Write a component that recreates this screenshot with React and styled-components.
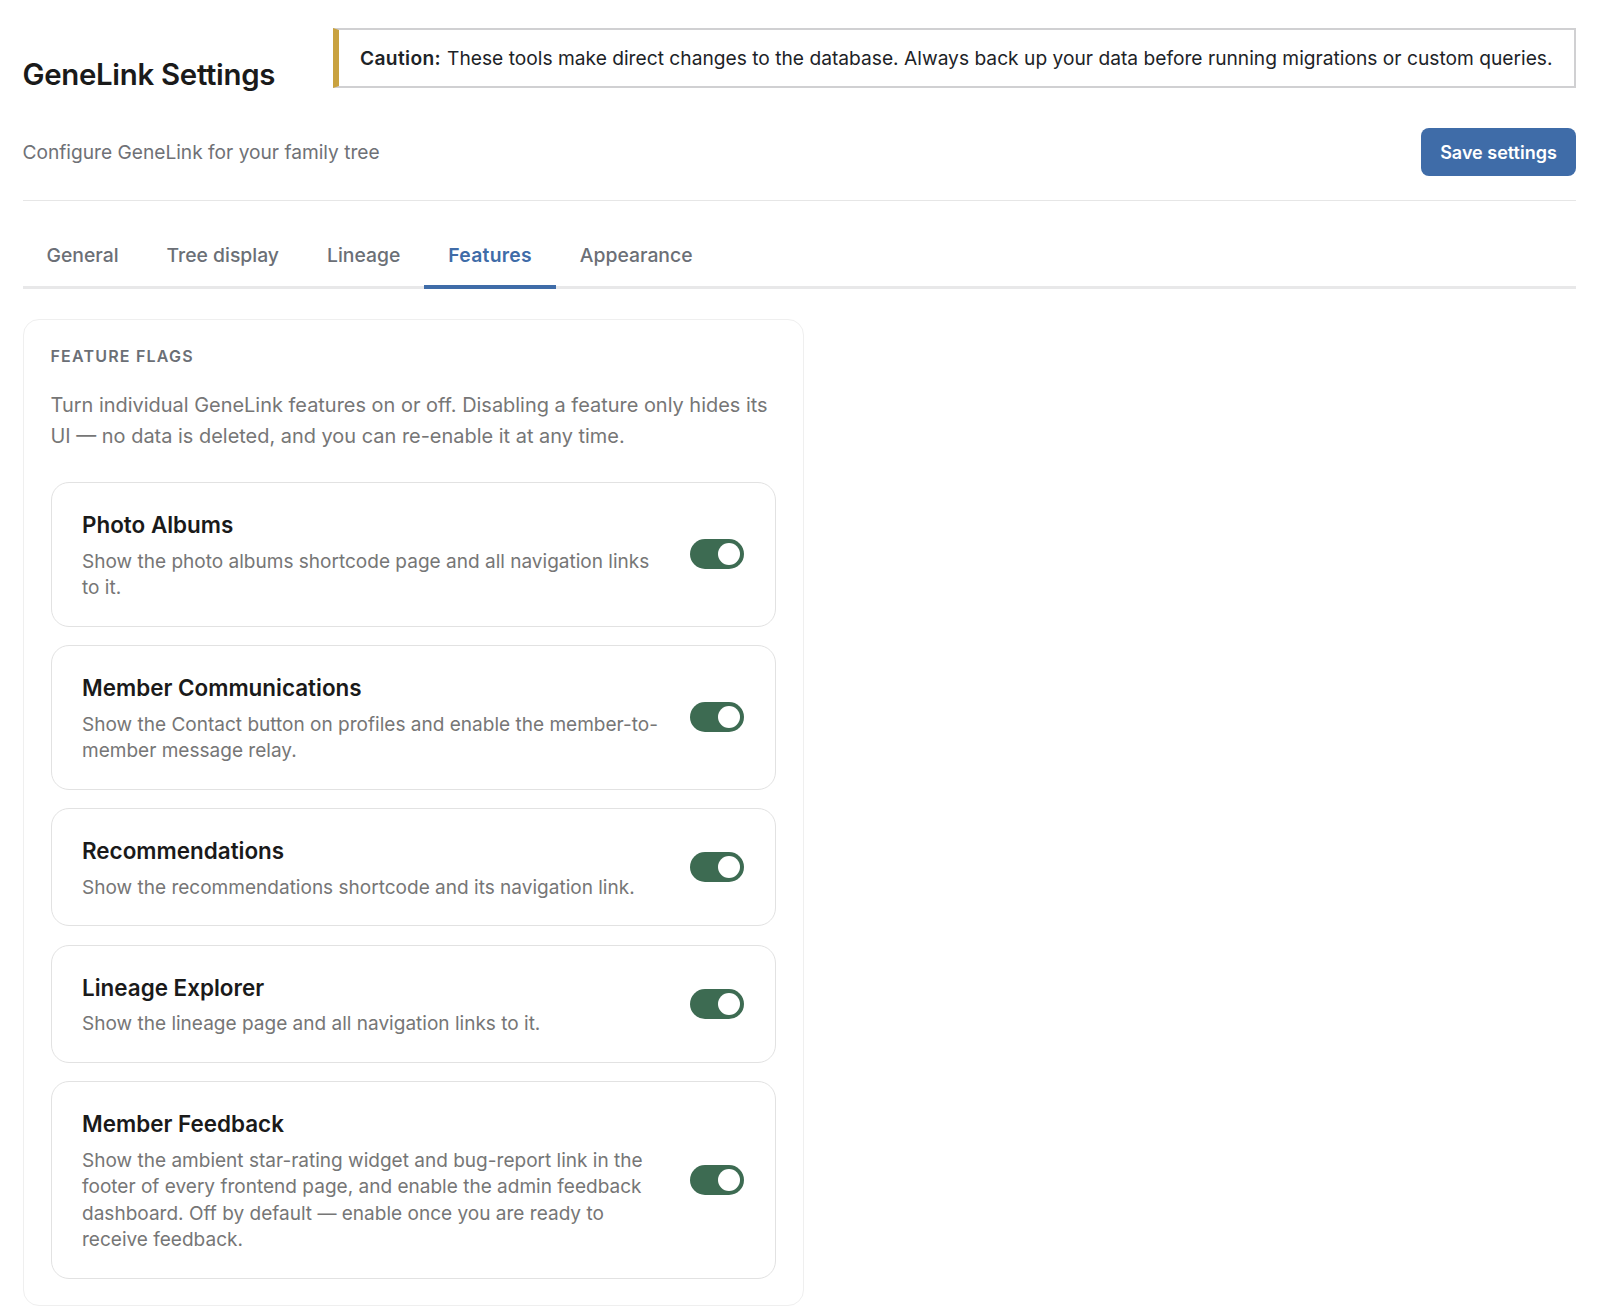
import React, { useState } from "react";
import styled, { createGlobalStyle } from "styled-components";

const GlobalStyle = createGlobalStyle`
  html, body {
    margin: 0;
    background: #fff;
    font-family: Inter, "Liberation Sans", sans-serif;
  }
`;

const Page = styled.div`
  padding: 28px 24px 4px 22.5px;
`;

const TopRow = styled.div`
  display: flex;
  align-items: flex-start;
`;

const Title = styled.h1`
  margin: 35px 0 0;
  width: 310.5px;
  font-size: 29.4px;
  line-height: 24px;
  font-weight: 600;
  color: #1a1a1a;
  letter-spacing: -0.3px;
  white-space: nowrap;
`;

const Notice = styled.div`
  flex: 1;
  box-sizing: border-box;
  height: 60px;
  display: flex;
  align-items: center;
  padding-left: 21px;
  background: #fff;
  border: 2px solid #d0d0d2;
  border-left: 6px solid #c9a23f;
  font-size: 19.2px;
  color: #1d2327;

  strong {
    font-weight: 600;
    letter-spacing: 0.35px;
    margin-right: 6px;
  }
`;

const SubRow = styled.div`
  display: flex;
  align-items: center;
  justify-content: space-between;
  margin-top: 40px;
  padding-bottom: 24px;
  border-bottom: 1px solid #e6e6e6;
`;

const Subtitle = styled.p`
  margin: 0;
  font-size: 19.15px;
  color: #6f7176;
`;

const SaveButton = styled.button`
  height: 48px;
  width: 155px;
  border: 0;
  border-radius: 8px;
  background: #3f6ca8;
  color: #fff;
  font: 600 18px Inter, sans-serif;
`;

const Tabs = styled.div`
  display: flex;
  margin-top: 27px;
  border-bottom: 3px solid #e8e8e9;
`;

const Tab = styled.div`
  padding: 15px 24px 18px;
  margin-bottom: -3px;
  font-size: 19.35px;
  line-height: 24px;
  font-weight: ${(p) => (p.$active ? 600 : 500)};
  letter-spacing: ${(p) => (p.$active ? "0.25px" : "0")};
  color: ${(p) => (p.$active ? "#3f6ca8" : "#6b6f76")};
  border-bottom: 4px solid ${(p) => (p.$active ? "#3f6ca8" : "transparent")};
`;

const Card = styled.section`
  box-sizing: border-box;
  width: 781px;
  margin-top: 30px;
  padding: 26px 27px 26px;
  border: 1px solid #efefef;
  border-radius: 16px;
`;

const CardLabel = styled.h2`
  margin: 0;
  font-size: 16px;
  line-height: 20px;
  font-weight: 600;
  letter-spacing: 1.2px;
  color: #6b6f76;
`;

const CardIntro = styled.p`
  margin: 24px 0 30px;
  font-size: 19.95px;
  line-height: 31px;
  color: #767676;
`;

const Rows = styled.div`
  display: flex;
  flex-direction: column;
  gap: 18.5px;
`;

const Row = styled.div`
  display: flex;
  align-items: center;
  gap: 27px;
  padding: 27px 31px 24px 30.5px;
  border: 1px solid #e2e2e2;
  border-radius: 18px;
`;

const RowText = styled.div`
  flex: 1;
`;

const RowTitle = styled.h3`
  margin: 0 0 9.5px;
  font-size: 22.45px;
  line-height: 29px;
  font-weight: 600;
  color: #1a1a1a;
`;

const RowDesc = styled.p`
  margin: 0;
  font-size: 19.05px;
  line-height: 26.5px;
  color: #767676;
`;

const Toggle = styled.button`
  position: relative;
  flex: none;
  width: 54px;
  height: 30px;
  margin-bottom: 3px;
  padding: 0;
  border: 0;
  border-radius: 15px;
  background: ${(p) => (p.$on ? "#3d6b52" : "#c3c4c7")};
  cursor: pointer;

  &::after {
    content: "";
    position: absolute;
    top: 4px;
    left: ${(p) => (p.$on ? "28px" : "4px")};
    width: 22px;
    height: 22px;
    border-radius: 50%;
    background: #fff;
  }
`;

const flags = [
  { title: "Photo Albums", desc: "Show the photo albums shortcode page and all navigation links to it." },
  { title: "Member Communications", desc: "Show the Contact button on profiles and enable the member-to-member message relay." },
  { title: "Recommendations", desc: "Show the recommendations shortcode and its navigation link." },
  { title: "Lineage Explorer", desc: "Show the lineage page and all navigation links to it." },
  {
    title: "Member Feedback",
    desc: "Show the ambient star-rating widget and bug-report link in the footer of every frontend page, and enable the admin feedback dashboard. Off by default \u2014 enable once you are ready to receive feedback.",
  },
];

const tabs = ["General", "Tree display", "Lineage", "Features", "Appearance"];

export default function App() {
  const [on, setOn] = useState(flags.map(() => true));
  return (
    <Page>
      <GlobalStyle />
      <TopRow>
        <Title>GeneLink Settings</Title>
        <Notice>
          <span>
            <strong>Caution:</strong>
            These tools make direct changes to the database. Always back up your data before running migrations or custom queries.
          </span>
        </Notice>
      </TopRow>
      <SubRow>
        <Subtitle>Configure GeneLink for your family tree</Subtitle>
        <SaveButton>Save settings</SaveButton>
      </SubRow>
      <Tabs>
        {tabs.map((t) => (
          <Tab key={t} $active={t === "Features"}>
            {t}
          </Tab>
        ))}
      </Tabs>
      <Card>
        <CardLabel>FEATURE FLAGS</CardLabel>
        <CardIntro>
          Turn individual GeneLink features on or off. Disabling a feature only hides its UI — no data is deleted, and you can re-enable it at any time.
        </CardIntro>
        <Rows>
          {flags.map((f, i) => (
            <Row key={f.title}>
              <RowText>
                <RowTitle>{f.title}</RowTitle>
                <RowDesc>{f.desc}</RowDesc>
              </RowText>
              <Toggle
                $on={on[i]}
                aria-label={f.title}
                onClick={() => setOn(on.map((v, j) => (j === i ? !v : v)))}
              />
            </Row>
          ))}
        </Rows>
      </Card>
    </Page>
  );
}
